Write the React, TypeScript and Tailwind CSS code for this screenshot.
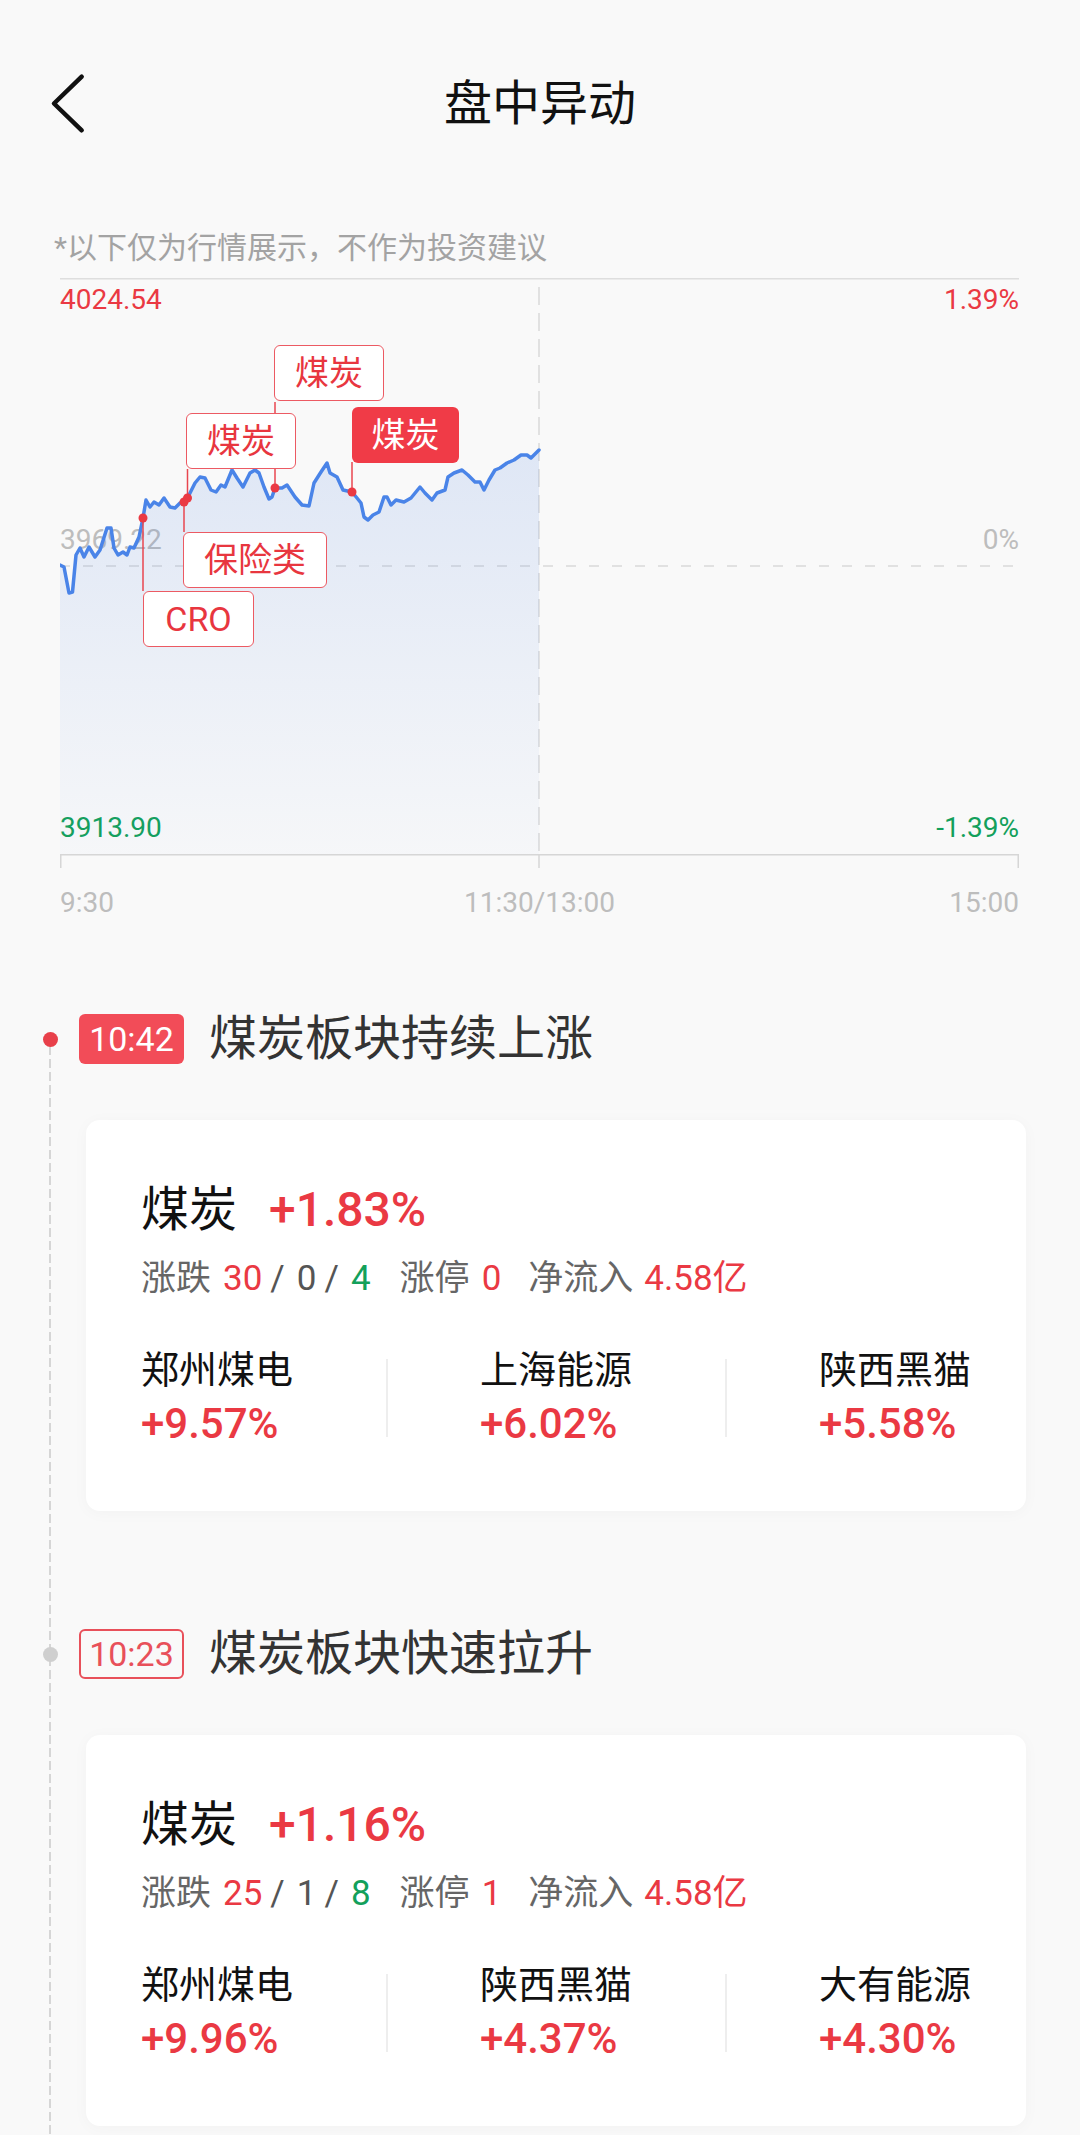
import React from "react";

const RED = "text-[#ea3943]";
const GREEN = "text-[#13a05b]";

// chart coordinates are local to the plot box (x from 60px, y from 278px)
const pts: [number, number][] = [
	[0, 287], [4, 289], [9, 315], [12.5, 314], [16, 277], [20, 270], [24, 279], [29, 269],
	[35, 279], [40, 272], [47, 250], [51, 250], [54, 270], [58, 277], [63, 274], [67, 277],
	[70, 269], [74, 270], [79, 259], [83, 240], [86, 222], [90, 229], [94, 224], [99, 227],
	[104, 220], [110, 229], [115, 230], [120, 225], [124, 224], [127.5, 220], [135, 205],
	[140, 199], [145, 200], [151, 212], [156, 214], [161, 207], [165, 209], [172, 192],
	[177, 200], [183, 209], [190, 195], [195, 192], [199, 195], [204, 209], [209, 221],
	[212, 219], [215, 210], [222, 210], [227, 207], [235, 219], [242, 227], [249, 228],
	[254, 205], [261, 194], [267, 185], [270, 195], [277, 199], [283, 212], [292, 214],
	[297, 220], [301, 225], [304, 239], [308, 242], [313, 237], [319, 234], [324, 219],
	[327, 219], [331, 227], [336, 222], [344, 224], [351, 220], [360, 209], [365, 215],
	[372, 222], [377, 215], [385, 212], [388, 199], [394, 195], [402, 192], [408, 197],
	[415, 204], [420, 204], [424, 212], [429, 202], [435, 192], [440, 190], [447, 185],
	[454, 182], [461, 177], [467, 177], [471, 180], [479, 172],
];

const linePath = pts.map((p, i) => `${i ? "L" : "M"}${p[0]} ${p[1]}`).join(" ");
const areaPath = `${linePath} L479 576 L0 576 Z`;

// markers: dot on the line + connector to the tag box
const markers = [
	{ x: 83, y: 240, to: 313 },
	{ x: 124, y: 224, to: 254 },
	{ x: 127.5, y: 220, to: 191 },
	{ x: 215, y: 210, to: 124 },
	{ x: 292, y: 214, to: 184 },
];

const tags = [
	{ label: "煤炭", cls: "left-[214px] top-[67px] w-[110px]", filled: false },
	{ label: "煤炭", cls: "left-[126px] top-[135px] w-[110px]", filled: false },
	{ label: "煤炭", cls: "left-[292px] top-[129px] w-[107px]", filled: true },
	{ label: "保险类", cls: "left-[123px] top-[254px] w-[144px]", filled: false },
	{ label: "CRO", cls: "left-[83px] top-[313px] w-[111px]", filled: false },
];

const events = [
	{
		time: "10:42",
		title: "煤炭板块持续上涨",
		active: true,
		name: "煤炭",
		pct: "+1.83%",
		up: "30",
		flat: "0",
		down: "4",
		limit: "0",
		flow: "4.58亿",
		stocks: [
			{ name: "郑州煤电", pct: "+9.57%" },
			{ name: "上海能源", pct: "+6.02%" },
			{ name: "陕西黑猫", pct: "+5.58%" },
		],
	},
	{
		time: "10:23",
		title: "煤炭板块快速拉升",
		active: false,
		name: "煤炭",
		pct: "+1.16%",
		up: "25",
		flat: "1",
		down: "8",
		limit: "1",
		flow: "4.58亿",
		stocks: [
			{ name: "郑州煤电", pct: "+9.96%" },
			{ name: "陕西黑猫", pct: "+4.37%" },
			{ name: "大有能源", pct: "+4.30%" },
		],
	},
];

function IntradayChart() {
	return (
		<div className="relative mt-[10px] ml-[60px] w-[959px] h-[590px] text-[28px] leading-none">
			{/* axis labels */}
			<span className={`absolute left-0 top-[8px] ${RED}`}>4024.54</span>
			<span className={`absolute right-0 top-[8px] ${RED}`}>1.39%</span>
			<span className="absolute left-0 top-[248px] text-[#bdbdbd]">3969.22</span>
			<span className="absolute right-0 top-[248px] text-[#bdbdbd]">0%</span>
			<span className={`absolute left-0 top-[536px] ${GREEN}`}>3913.90</span>
			<span className={`absolute right-0 top-[536px] ${GREEN}`}>-1.39%</span>

			<svg
				className="absolute inset-0"
				width="959"
				height="590"
				viewBox="0 0 959 590"
				fill="none"
			>
				<defs>
					<linearGradient id="area" x1="0" y1="170" x2="0" y2="576" gradientUnits="userSpaceOnUse">
						<stop offset="0" stopColor="#4a7fe0" stopOpacity="0.15" />
						<stop offset="1" stopColor="#4a7fe0" stopOpacity="0.02" />
					</linearGradient>
				</defs>
				<line x1="0" y1="0.75" x2="959" y2="0.75" stroke="#dedede" strokeWidth="1.5" />
				<line x1="0" y1="288" x2="959" y2="288" stroke="#d9d9d9" strokeWidth="1.5" strokeDasharray="10 13" />
				<line x1="479" y1="9" x2="479" y2="576" stroke="#d9d9d9" strokeWidth="1.5" strokeDasharray="18 8" />
				<path d={areaPath} fill="url(#area)" />
				<path d={linePath} stroke="#4a84e8" strokeWidth="3.5" strokeLinejoin="round" strokeLinecap="round" />
				{markers.map((m, i) => (
					<g key={i}>
						<line x1={m.x} y1={m.y} x2={m.x} y2={m.to} stroke="#e8464f" strokeWidth="1.5" />
						<circle cx={m.x} cy={m.y} r="4.5" fill="#ea3943" />
					</g>
				))}
				{/* time axis */}
				<line x1="0" y1="576.75" x2="959" y2="576.75" stroke="#d6d6d6" strokeWidth="1.5" />
				<line x1="0.75" y1="576" x2="0.75" y2="590" stroke="#d6d6d6" strokeWidth="1.5" />
				<line x1="479" y1="576" x2="479" y2="590" stroke="#d6d6d6" strokeWidth="1.5" />
				<line x1="958.25" y1="576" x2="958.25" y2="590" stroke="#d6d6d6" strokeWidth="1.5" />
			</svg>

			{tags.map((t, i) => (
				<div
					key={i}
					className={`absolute ${t.cls} h-[56px] rounded-[6px] flex items-center justify-center text-[34px] ${
						t.filled
							? "bg-[#f03b47] text-white"
							: "bg-white border-[1.5px] border-[#ec5a63] text-[#e8363f]"
					}`}
				>
					{t.label}
				</div>
			))}
		</div>
	);
}

function EventCard({ ev }: { ev: (typeof events)[number] }) {
	return (
		<div className="mt-[56px] ml-[86px] w-[940px] h-[391px] rounded-[14px] bg-white shadow-[0_2px_16px_rgba(0,0,0,0.03)] px-[55px] pt-[60px]">
			<div className="flex items-baseline h-[60px] leading-[60px]">
				<span className="text-[48px] text-[#111]">{ev.name}</span>
				<span className={`ml-[32px] text-[48px] font-medium ${RED}`}>{ev.pct}</span>
			</div>

			<div className="mt-[19px] flex items-center h-[40px] leading-[40px] text-[35px] text-[#666]">
				<span>涨跌</span>
				<span className={`ml-[12px] ${RED}`}>{ev.up}</span>
				<span className="ml-[8px] text-[#555]">/</span>
				<span className="ml-[12px] text-[#555]">{ev.flat}</span>
				<span className="ml-[8px] text-[#555]">/</span>
				<span className={`ml-[12px] ${GREEN}`}>{ev.down}</span>
				<span className="ml-[29px]">涨停</span>
				<span className={`ml-[12px] ${RED}`}>{ev.limit}</span>
				<span className="ml-[27px]">净流入</span>
				<span className={`ml-[11px] ${RED}`}>{ev.flow}</span>
			</div>

			<div className="mt-[49px] flex items-center justify-between">
				{ev.stocks.map((s, i) => (
					<React.Fragment key={s.name}>
						{i > 0 && <div className="w-[2px] h-[78px] bg-[#eeeeee]" />}
						<div className="w-[152px]">
							<div className="h-[44px] leading-[44px] text-[38px] text-[#111]">{s.name}</div>
							<div className={`mt-[8px] h-[48px] leading-[48px] text-[42px] font-medium ${RED}`}>{s.pct}</div>
						</div>
					</React.Fragment>
				))}
			</div>
		</div>
	);
}

export default function App() {
	return (
		<div className="min-h-[2135px] w-[1080px] bg-[#f9f9f9] font-[family-name:Roboto,'Noto_Sans_CJK_SC',sans-serif]">
			{/* Header */}
			<header className="relative h-[208px] flex items-center justify-center">
				<button className="absolute left-[48px] top-[72px]" aria-label="返回">
					<svg width="40" height="64" viewBox="0 0 40 64" fill="none">
						<path
							d="M33.7 4.7L6 31.5L33.7 58.3"
							stroke="#111"
							strokeWidth="4.5"
							strokeLinecap="round"
							strokeLinejoin="round"
						/>
					</svg>
				</button>
				<h1 className="text-[48px] leading-none text-[#111]">盘中异动</h1>
			</header>

			<p className="mt-[20px] ml-[54px] text-[30px] leading-[40px] text-[#a3a3a3]">
				*以下仅为行情展示，不作为投资建议
			</p>

			<IntradayChart />

			<div className="mt-[21px] ml-[60px] w-[959px] grid grid-cols-3 text-[28px] leading-none text-[#bdbdbd]">
				<span className="text-left">9:30</span>
				<span className="text-center">11:30/13:00</span>
				<span className="text-right">15:00</span>
			</div>

			{/* Timeline */}
			<section className="relative mt-[97px] pb-[9px]">
				<div className="absolute left-[49px] top-[32px] bottom-0 w-[2px] bg-[repeating-linear-gradient(to_bottom,#d6d6d6_0_9px,transparent_9px_13px)]" />
				{events.map((ev, i) => (
					<div key={ev.time} className={`relative ${i > 0 ? "mt-[118px]" : ""}`}>
						<span
							className={`absolute left-[43px] top-[18px] w-[15px] h-[15px] rounded-full ${
								ev.active ? "bg-[#e8404a]" : "bg-[#cfcfcf]"
							}`}
						/>
						<div className="flex items-center pl-[79px]">
							<div
								className={`w-[105px] h-[50px] rounded-[6px] flex items-center justify-center text-[34px] ${
									ev.active
										? "bg-[#f24c58] text-white"
										: "border-2 border-[#e8505a] text-[#e8505a]"
								}`}
							>
								{ev.time}
							</div>
							<h2 className="ml-[25px] text-[48px] leading-none text-[#333]">{ev.title}</h2>
						</div>
						<EventCard ev={ev} />
					</div>
				))}
			</section>
		</div>
	);
}
